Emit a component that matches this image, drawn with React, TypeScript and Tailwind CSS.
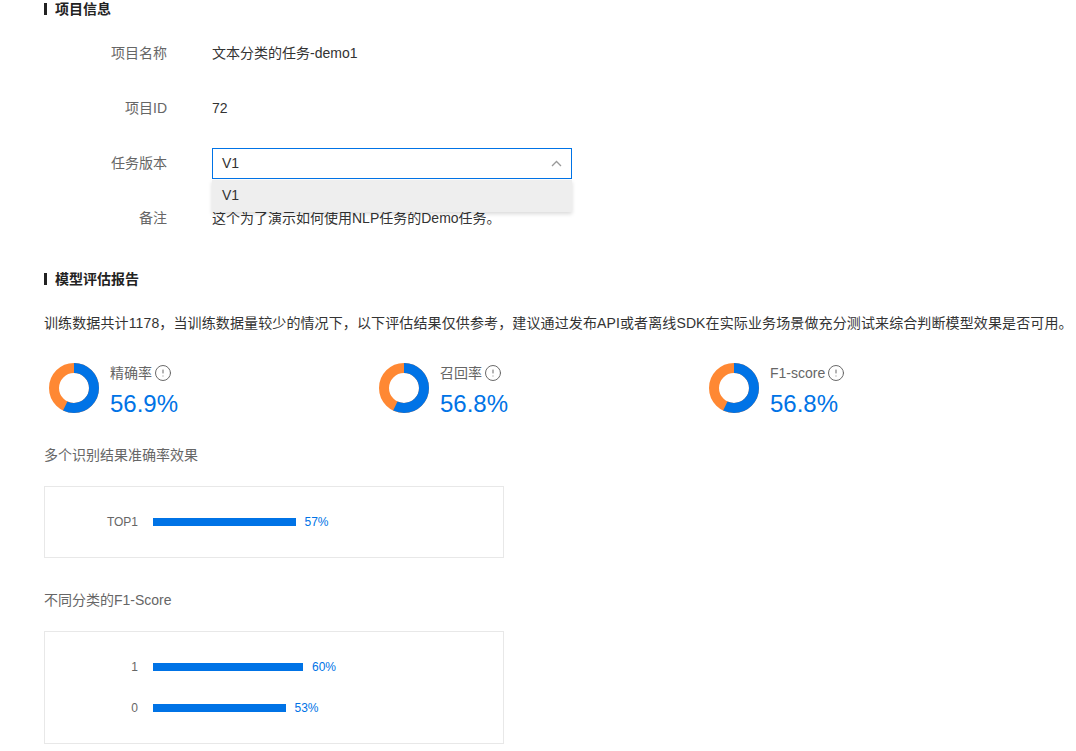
import React from "react";
import { CircleAlert } from "lucide-react";

const FONT = { fontFamily: '"Liberation Sans", "Noto Sans CJK SC", sans-serif' };

function SectionTitle({ children }: { children: React.ReactNode }) {
  return (
    <div className="flex h-[18px] items-center gap-[8px]">
      <div className="h-[12px] w-[3px] bg-[#222]" />
      <div className="text-[14px] font-bold leading-[18px] text-[#222]">{children}</div>
    </div>
  );
}

function InfoRow({ label, children }: { label: string; children: React.ReactNode }) {
  return (
    <div className="flex h-[32px] items-center">
      <div className="w-[123px] text-right text-[14px] text-[#666]">{label}</div>
      <div className="ml-[45px] flex items-center text-[14px] text-[#333]">{children}</div>
    </div>
  );
}

function Donut({ value }: { value: number }) {
  const r = 20;
  const c = 2 * Math.PI * r;
  const blue = (c * value) / 100;
  return (
    <svg width="50" height="50" viewBox="0 0 50 50" className="shrink-0">
      <circle cx="25" cy="25" r={r} fill="none" stroke="#ff8833" strokeWidth="10" />
      <circle
        cx="25"
        cy="25"
        r={r}
        fill="none"
        stroke="#0073e6"
        strokeWidth="10"
        strokeDasharray={`${blue} ${c - blue}`}
        transform="rotate(-90 25 25)"
      />
    </svg>
  );
}

function Metric({ label, value, pct }: { label: string; value: string; pct: number }) {
  return (
    <div className="flex w-[330px] items-start gap-[11px]">
      <Donut value={pct} />
      <div className="flex flex-col">
        <div className="flex h-[20px] items-center gap-[2px] text-[14px] text-[#666]">
          <span>{label}</span>
          <CircleAlert size={18} strokeWidth={1.3} color="#666" />
        </div>
        <div className="mt-[8px] text-[24px] leading-[26px] text-[#0073e6]">{value}</div>
      </div>
    </div>
  );
}

function BarBox({ rows }: { rows: { label: string; pct: number }[] }) {
  return (
    <div className="flex w-[460px] flex-col gap-[21px] border border-[#e8e8e8] py-[25px]">
      {rows.map((r) => (
        <div key={r.label} className="flex h-[20px] items-center">
          <div className="w-[93px] text-right text-[12px] text-[#666]">{r.label}</div>
          <div className="ml-[15px] h-[8px] bg-[#0073e6]" style={{ width: `${r.pct * 2.5}px` }} />
          <div className="ml-[9px] text-[12px] text-[#0073e6]">{r.pct}%</div>
        </div>
      ))}
    </div>
  );
}

export default function App() {
  return (
    <div className="min-h-[751px] w-[1076px] bg-white pl-[44px]" style={FONT}>
      <SectionTitle>项目信息</SectionTitle>
      <div className="mt-[19px] flex flex-col gap-[23px]">
        <InfoRow label="项目名称">文本分类的任务-demo1</InfoRow>
        <InfoRow label="项目ID">72</InfoRow>
        <InfoRow label="任务版本">
          <div className="relative">
            <div className="flex h-[31px] w-[360px] items-center justify-between border border-[#0073e6] bg-white pl-[9px] pr-[9px]">
              <span className="text-[14px] text-[#333]">V1</span>
              <svg width="11" height="7" viewBox="0 0 11 7">
                <polyline points="1,6 5.5,1.5 10,6" fill="none" stroke="#999" strokeWidth="1.3" />
              </svg>
            </div>
            <div className="absolute left-0 top-[32px] z-10 flex h-[32px] w-[360px] items-center bg-[#eeeeee] pl-[10px] text-[14px] text-[#333] shadow-[0_2px_4px_rgba(0,0,0,0.15)]">
              V1
            </div>
          </div>
        </InfoRow>
        <InfoRow label="备注">这个为了演示如何使用NLP任务的Demo任务。</InfoRow>
      </div>

      <div className="mt-[36px]">
        <SectionTitle>模型评估报告</SectionTitle>
      </div>
      <div className="mt-[25px] whitespace-nowrap text-[14px] leading-[20px] tracking-[0.12px] text-[#333]">
        训练数据共计1178，当训练数据量较少的情况下，以下评估结果仅供参考，建议通过发布API或者离线SDK在实际业务场景做充分测试来综合判断模型效果是否可用。
      </div>

      <div className="ml-[5px] mt-[30px] flex">
        <Metric label="精确率" value="56.9%" pct={56.9} />
        <Metric label="召回率" value="56.8%" pct={56.8} />
        <Metric label="F1-score" value="56.8%" pct={56.8} />
      </div>

      <div className="mt-[28px] text-[14px] leading-[20px] text-[#666]">多个识别结果准确率效果</div>
      <div className="mt-[21px]">
        <BarBox rows={[{ label: "TOP1", pct: 57 }]} />
      </div>

      <div className="mt-[32px] text-[14px] leading-[20px] text-[#666]">不同分类的F1-Score</div>
      <div className="mt-[21px]">
        <BarBox
          rows={[
            { label: "1", pct: 60 },
            { label: "0", pct: 53 },
          ]}
        />
      </div>
    </div>
  );
}
